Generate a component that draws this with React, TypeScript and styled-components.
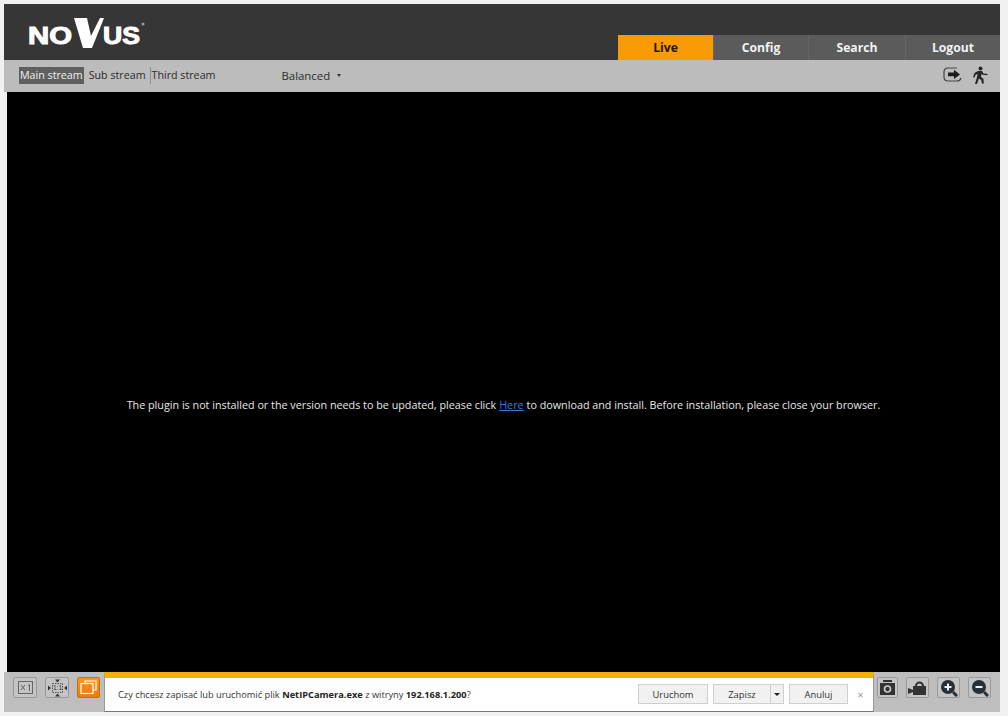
import React from 'react';
import styled, { createGlobalStyle } from 'styled-components';

const GlobalStyle = createGlobalStyle`
	html, body {
		margin: 0;
		padding: 0;
		background: #f1f1f1;
		font-family: "Open Sans", "Noto Sans", sans-serif;
	}
`;

const Page = styled.div`
	position: relative;
	width: 1008px;
	height: 716px;
	padding: 4px 8px 4px 4px;
	box-sizing: border-box;
	display: flex;
	flex-direction: column;
	overflow: hidden;
`;

const Header = styled.header`
	height: 56px;
	background: #363636;
	display: flex;
	justify-content: space-between;
	align-items: flex-end;
`;

const LogoWrap = styled.div`
	margin: 0 0 12px 24px;
	line-height: 0;
`;

const Tabs = styled.nav`
	display: flex;
`;

const Tab = styled.div<{ $active?: boolean; $w: number }>`
	width: ${p => p.$w}px;
	height: 25px;
	display: flex;
	align-items: center;
	justify-content: center;
	box-sizing: border-box;
	font-size: 12.2px;
	font-weight: 700;
	color: ${p => (p.$active ? '#241400' : '#f2f2f2')};
	background: ${p => (p.$active ? '#f79a04' : '#5b5b5b')};
	border-left: ${p => (p.$active ? 'none' : '1px solid #666')};
`;

const Toolbar = styled.div`
	height: 32px;
	background: #bcbcbc;
	display: flex;
	align-items: center;
	padding: 0 12px 2px 15px;
	box-sizing: border-box;
	font-size: 10.7px;
	color: #2c2c2c;
`;

const StreamTab = styled.div<{ $active?: boolean; $divider?: boolean }>`
	height: 17px;
	line-height: 17px;
	padding: 0 1px;
	margin-right: ${p => (p.$active ? 4 : 3)}px;
	white-space: nowrap;
	color: ${p => (p.$active ? '#f0f0f0' : '#2c2c2c')};
	background: ${p => (p.$active ? '#5f5f5f' : 'transparent')};
	border-left: ${p => (p.$divider ? '1px solid #8f8f8f' : 'none')};
`;

const Quality = styled.div`
	margin-left: 62px;
	font-size: 11.4px;
	display: flex;
	align-items: center;
	gap: 7px;
	flex: 1;
`;

const Caret = styled.span`
	width: 0;
	height: 0;
	border-left: 2.5px solid transparent;
	border-right: 2.5px solid transparent;
	border-top: 3px solid #333;
`;

const ToolIcons = styled.div`
	display: flex;
	align-items: center;
	gap: 9px;
`;

const Video = styled.main`
	flex: 1;
	margin-left: 3px;
	background: #000;
	display: flex;
	align-items: center;
	justify-content: center;
	padding-top: 45px;
	box-sizing: border-box;
	color: #e8e8e8;
	font-size: 10.77px;
	white-space: nowrap;
`;

const PluginLink = styled.span`
	color: #3f78d8;
	text-decoration: underline;
	margin: 0 3px;
`;

const BottomBar = styled.footer`
	height: 40px;
	background: #bebebe;
	display: flex;
	justify-content: space-between;
	align-items: flex-start;
	padding: 5px 9px 0 9px;
	box-sizing: border-box;
`;

const IconGroup = styled.div`
	display: flex;
	gap: 8px;
`;

const IconButton = styled.div<{ $active?: boolean; $w?: number }>`
	width: ${p => p.$w ?? 23}px;
	height: 21px;
	box-sizing: border-box;
	border-radius: 2px;
	border: 1px solid ${p => (p.$active ? '#c96f08' : '#9a9a9a')};
	background: ${p => (p.$active ? 'linear-gradient(#f49a1f, #e57e0c)' : '#c4c4c4')};
	display: flex;
	align-items: center;
	justify-content: center;
`;

const Notification = styled.div`
	position: absolute;
	left: 104px;
	top: 672px;
	width: 770px;
	height: 40px;
	box-sizing: border-box;
	background: #fff;
	border-top: 6px solid #eeb00c;
	border-bottom: 1px solid #777;
	border-left: 1px solid #999;
	border-right: 1px solid #999;
	display: flex;
	align-items: center;
	padding: 0 0 1px 13px;
	font-size: 9.25px;
	color: #333;
	white-space: nowrap;
`;

const Message = styled.div`
	flex: 1;
	b {
		font-weight: 700;
		color: #222;
	}
`;

const Actions = styled.div`
	display: flex;
	gap: 5px;
`;

const SplitButton = styled.div`
	display: flex;
`;

const NotifyButton = styled.div<{ $w: number }>`
	width: ${p => p.$w}px;
	height: 20px;
	box-sizing: border-box;
	background: #f1f1f1;
	border: 1px solid #cfcfcf;
	display: flex;
	align-items: center;
	justify-content: center;
	font-size: 9.4px;
	color: #333;
`;

const SplitCaret = styled(NotifyButton)`
	margin-left: -1px;
`;

const DarkCaret = styled.span`
	width: 0;
	height: 0;
	border-left: 3px solid transparent;
	border-right: 3px solid transparent;
	border-top: 3px solid #222;
`;

const Close = styled.div`
	width: 25px;
	text-align: center;
	font-size: 11px;
	color: #999;
`;

const RatioLabel = styled.text`
	font-family: "Liberation Sans", sans-serif;
	font-size: 6.5px;
	fill: #333;
`;

function Logo() {
	return (
		<svg width="120" height="38" viewBox="0 0 120 38">
			<text x="0" y="34" fontFamily="Liberation Sans" fontWeight="700" fontSize="23" fill="#fff" stroke="#fff" strokeWidth="1" textLength="44" lengthAdjust="spacingAndGlyphs">NO</text>
			<polygon points="46,8 59,8 63,26 72,8 76,8 64,38 55,38" fill="#fff" />
			<text x="75" y="34" fontFamily="Liberation Sans" fontWeight="700" fontSize="23" fill="#fff" stroke="#fff" strokeWidth="1" textLength="37" lengthAdjust="spacingAndGlyphs">US</text>
			<circle cx="115" cy="14" r="1.6" fill="#999" />
		</svg>
	);
}

export default function App() {
	return (
		<Page>
			<GlobalStyle />
			<Header>
				<LogoWrap><Logo /></LogoWrap>
				<Tabs>
					<Tab $active $w={95}>Live</Tab>
					<Tab $w={95}>Config</Tab>
					<Tab $w={97}>Search</Tab>
					<Tab $w={95}>Logout</Tab>
				</Tabs>
			</Header>
			<Toolbar>
				<StreamTab $active>Main stream</StreamTab>
				<StreamTab>Sub stream</StreamTab>
				<StreamTab $divider>Third stream</StreamTab>
				<Quality>Balanced <Caret /></Quality>
				<ToolIcons>
					<svg width="20" height="18" viewBox="0 0 20 18" fill="none">
						<path d="M14 2H5C2.500 2 1 3.500 1 6v5c0 2.500 1.500 4 4 4h9c2 0 3.500-1 4-3" stroke="#444" strokeWidth="1.200" />
						<path d="M5 6.500h6V3.800L17 8.500 11 13v-2.800H5z" fill="#1c1c1c" />
					</svg>
					<svg width="16" height="18" viewBox="0 0 16 18" fill="#262626">
						<circle cx="8.500" cy="2.500" r="2" />
						<path d="M6 5h4l1.500 2.500 4 .5v1.300l-5-.6-.8-.9-.7 3 2.500 2.200.3 4.500H10l-.8-3.500-2.300-1.500L5 18H3l2-7 .6-3-2 .8L2.500 11.500 1 11l1.500-4z" />
					</svg>
				</ToolIcons>
			</Toolbar>
			<Video>
				<span>
					The plugin is not installed or the version needs to be updated, please click
					<PluginLink>Here</PluginLink>
					to download and install. Before installation, please close your browser.
				</span>
			</Video>
			<BottomBar>
				<IconGroup>
					<IconButton $w={24}>
						<svg width="15" height="13" viewBox="0 0 15 13" fill="none" stroke="#666">
							<rect x="0.500" y="0.500" width="14" height="12" />
							<path d="M3 4l4 5M7 4L3 9M10 4.500l1.500-1V10" />
						</svg>
					</IconButton>
					<IconButton $w={24}>
						<svg width="21" height="18" viewBox="0 0 21 18" fill="none">
							<rect x="5.500" y="4.500" width="10" height="9" stroke="#555" strokeDasharray="1.500 1" />
							<RatioLabel x="10.500" y="11" textAnchor="middle">1:1</RatioLabel>
							<path d="M10.500 3.500L8 0.500h5zM10.500 14.500L8 17.500h5zM4 9L1 6.500v5zM17 9l3-2.500v5z" fill="#333" />
						</svg>
					</IconButton>
					<IconButton $active>
						<svg width="17" height="15" viewBox="0 0 17 15" fill="none" stroke="#fff" strokeWidth="1.200">
							<path d="M5 3V1h11v9h-3" />
							<rect x="1" y="3.500" width="12" height="10" />
						</svg>
					</IconButton>
				</IconGroup>
				<IconGroup>
					<IconButton $w={21}>
						<svg width="17" height="15" viewBox="0 0 17 15" fill="#333">
							<path d="M1 3h15v12H1zM4 0h9v2H4z" />
							<circle cx="8.500" cy="9" r="3.800" fill="#ccc" />
							<circle cx="8.500" cy="9" r="2.200" />
						</svg>
					</IconButton>
					<IconButton $w={23}>
						<svg width="19" height="15" viewBox="0 0 19 15" fill="#333">
							<rect x="5" y="6" width="13" height="9" />
							<path d="M0 8l5 2v2l-5 2z" />
							<path d="M7 6a4.500 4.500 0 0 1 9 0h-2a2.500 2.500 0 0 0-5 0z" />
						</svg>
					</IconButton>
					<IconButton $w={23}>
						<svg width="18" height="18" viewBox="0 0 18 18" fill="none">
							<circle cx="8" cy="8" r="7" fill="#263036" />
							<path d="M13 13l4 4" stroke="#263036" strokeWidth="3" />
							<path d="M4.500 8h7M8 4.500v7" stroke="#f0f0f0" strokeWidth="2" />
						</svg>
					</IconButton>
					<IconButton $w={23}>
						<svg width="18" height="18" viewBox="0 0 18 18" fill="none">
							<circle cx="8" cy="8" r="7" fill="#263036" />
							<path d="M13 13l4 4" stroke="#263036" strokeWidth="3" />
							<path d="M4.500 8h7" stroke="#f0f0f0" strokeWidth="2" />
						</svg>
					</IconButton>
				</IconGroup>
			</BottomBar>
			<Notification>
				<Message>Czy chcesz zapisać lub uruchomić plik <b>NetIPCamera.exe</b> z witryny <b>192.168.1.200</b>?</Message>
				<Actions>
					<NotifyButton $w={70}>Uruchom</NotifyButton>
					<SplitButton>
						<NotifyButton $w={58}>Zapisz</NotifyButton>
						<SplitCaret $w={14}><DarkCaret /></SplitCaret>
					</SplitButton>
					<NotifyButton $w={59}>Anuluj</NotifyButton>
				</Actions>
				<Close>×</Close>
			</Notification>
		</Page>
	);
}
